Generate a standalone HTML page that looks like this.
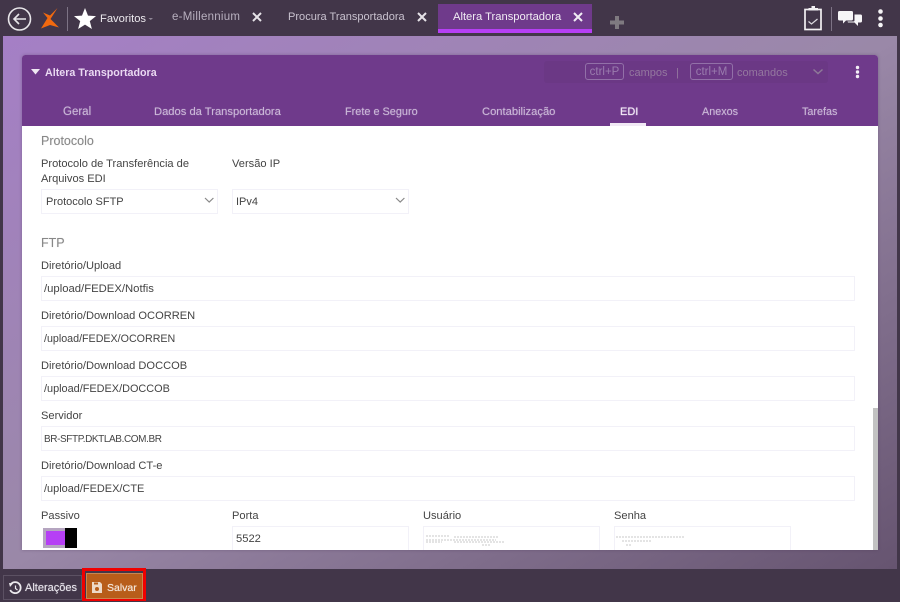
<!DOCTYPE html>
<html><head><meta charset="utf-8"><style>
html,body{margin:0;padding:0}
body{width:900px;height:602px;position:relative;overflow:hidden;background:#423649;font-family:"Liberation Sans",sans-serif;font-size:11.2px;color:#444}
.t{position:absolute;white-space:nowrap;line-height:14px}
.b{position:absolute;box-sizing:border-box;border:1px solid #f2f1f8;background:#fff;height:25px;padding:0 0 0 2px;line-height:25px;color:#444;white-space:nowrap}
.s{padding-left:4px;line-height:25px;font-size:11px}
.h{color:#cbb8d8;text-shadow:0 0 1px rgba(203,184,216,.6)}
.sec{color:#888;font-size:12.500px;text-shadow:0 0 .6px rgba(136,136,136,.5)}
.x{position:absolute}
</style></head><body>
<div class="x" style="left:3px;top:36px;width:894px;height:533px;background:linear-gradient(to bottom right,#a57fc6 0%,#9a88a8 50%,#665470 100%)"></div>

<svg class="x" style="left:0;top:0" width="200" height="36">
<circle cx="19.500" cy="19" r="11" fill="none" stroke="#e8e6ea" stroke-width="1.600"/>
<path d="M26 19H14M19 14l-5 5 5 5" fill="none" stroke="#e8e6ea" stroke-width="1.600"/>
<path d="M57.500 8 50.500 19 59 27.500 50 25 41 28.500 47.500 18 43 12.500 50 15.500z" fill="#f2690f"/>
<rect x="67" y="7" width="1" height="24" fill="#7d7385"/>
<path d="M85 8l3 7.600 8 .5-6.200 5 2.100 7.900L85 24.600l-6.900 4.400 2.100-7.900-6.200-5 8-.5z" fill="#fff"/>
<path d="M148.500 18h4.500l-2.250 2z" fill="#8f8796"/>
</svg>
<div class="t" style="left:100px;top:12px;color:#ece9ee;font-size:11.200px">Favoritos</div>
<div class="t" style="left:172px;top:10px;font-size:11.500px;letter-spacing:.25px;color:#b8b0bf">e-Millennium</div>
<div class="t" style="left:288px;top:10px;font-size:11.050px;color:#c8c1ce">Procura Transportadora</div>
<svg class="x" style="left:251px;top:11px" width="12" height="12"><path d="M2 2l8 8M10 2l-8 8" stroke="#e6e3e8" stroke-width="2"/></svg>
<svg class="x" style="left:416px;top:11px" width="12" height="12"><path d="M2 2l8 8M10 2l-8 8" stroke="#e6e3e8" stroke-width="2"/></svg>
<div class="x" style="left:438px;top:4px;width:154px;height:29px;background:#6f3a8b;border-bottom:4px solid #b63ff5;box-sizing:border-box"></div>
<div class="t" style="left:453px;top:10px;color:#f0ecf3;font-size:11.200px">Altera Transportadora</div>
<svg class="x" style="left:572px;top:11px" width="12" height="12"><path d="M2 2l8 8M10 2l-8 8" stroke="#f0ecf3" stroke-width="2"/></svg>
<svg class="x" style="left:609px;top:15px" width="16" height="16"><path d="M8 1v13M1 7.500h14" stroke="#7f7a80" stroke-width="4"/></svg>

<svg class="x" style="left:800px;top:0" width="100" height="36">
<rect x="5" y="9.500" width="16" height="20" fill="none" stroke="#f2f0f3" stroke-width="1.700"/>
<path d="M8.500 10.500V8h3V6h3.500v2h3v2.500z" fill="#f2f0f3"/>
<path d="M8.500 21.500l3 2.500 6-5" fill="none" stroke="#dcd9df" stroke-width="1.200"/>
<rect x="31" y="7" width="1" height="24" fill="#7d7385"/>
<path d="M39.500 11h12a1.500 1.500 0 0 1 1.500 1.500v6.500a1.500 1.500 0 0 1-1.500 1.500H46l-3 3v-3h-3.500a1.500 1.500 0 0 1-1.500-1.500v-6.500a1.500 1.500 0 0 1 1.500-1.500z" fill="#f6f5f7"/>
<path d="M54.500 14.500h6a1.500 1.500 0 0 1 1.500 1.500v5a1.500 1.500 0 0 1-1.500 1.500H58v3.500l-3.500-3.500H48l-.5-1h6a1 1 0 0 0 1-1z" fill="#f6f5f7"/>
<circle cx="80.500" cy="11.500" r="2.300" fill="#f6f5f7"/><circle cx="80.500" cy="18.500" r="2.300" fill="#f6f5f7"/><circle cx="80.500" cy="25" r="2.300" fill="#f6f5f7"/>
</svg>

<div class="x" style="left:22px;top:55px;width:856px;height:495px;background:#fff;border-radius:3px 3px 0 0;overflow:hidden;box-shadow:0 0 3px rgba(70,50,80,.35)">
<div class="x" style="left:0;top:0;width:856px;height:71px;background:#6f3a8b"></div>
</div>
<svg class="x" style="left:30px;top:68px" width="12" height="8"><path d="M1 1h9L5.500 6.500z" fill="#efe8f3"/></svg>
<div class="t" style="left:45px;top:66px;color:#ead9f2;font-weight:bold;font-size:10.700px">Altera Transportadora</div>

<div class="x" style="left:544px;top:61px;width:284px;height:22px;background:#6b3885;border-radius:3px"></div>
<div class="x" style="left:585px;top:63px;width:39px;height:17px;border:1px solid #9270a8;border-radius:3px;box-sizing:border-box;color:#9a7cae;font-size:11.500px;line-height:17px;text-align:center">ctrl+P</div>
<div class="t" style="left:629px;top:66px;color:#94789f;font-size:11px">campos</div>
<div class="t" style="left:676px;top:66px;color:#94789f;font-size:11px">|</div>
<div class="x" style="left:690px;top:63px;width:43px;height:17px;border:1px solid #9270a8;border-radius:3px;box-sizing:border-box;color:#9a7cae;font-size:11.500px;line-height:17px;text-align:center">ctrl+M</div>
<div class="t" style="left:737px;top:66px;color:#94789f;font-size:11px">comandos</div>
<svg class="x" style="left:812px;top:68px" width="12" height="8"><path d="M1.500 1.500l4.500 4 4.500-4" fill="none" stroke="#8e7a98" stroke-width="1.500"/></svg>
<svg class="x" style="left:854px;top:65px" width="8" height="14"><circle cx="3.500" cy="2.500" r="1.700" fill="#f2edf5"/><circle cx="3.500" cy="7" r="1.700" fill="#f2edf5"/><circle cx="3.500" cy="11.500" r="1.700" fill="#f2edf5"/></svg>

<div class="t h" style="left:63px;top:105px;font-size:11.500px">Geral</div>
<div class="t h" style="left:154px;top:105px;font-size:11.200px">Dados da Transportadora</div>
<div class="t h" style="left:345px;top:105px;font-size:10.900px">Frete e Seguro</div>
<div class="t h" style="left:482px;top:105px;font-size:11.200px">Contabilização</div>
<div class="t" style="left:620px;top:105px;color:#f2e8f7;font-size:11px;text-shadow:0 0 1px #f2e8f7">EDI</div>
<div class="x" style="left:610px;top:123px;width:36px;height:3px;background:#f1e9f5"></div>
<div class="t h" style="left:702px;top:105px;font-size:10.800px">Anexos</div>
<div class="t h" style="left:802px;top:105px;font-size:10.800px">Tarefas</div>

<div class="t sec" style="left:41px;top:134px">Protocolo</div>
<div class="t" style="left:41px;top:157px;font-size:11.100px">Protocolo de Transferência de</div>
<div class="t" style="left:41px;top:172px;font-size:11.100px">Arquivos EDI</div>
<div class="t" style="left:232px;top:157px;font-size:11.100px">Versão IP</div>
<div class="b s" style="left:41px;top:189px;width:177px">Protocolo SFTP</div>
<div class="b s" style="left:232px;top:189px;width:177px;padding-left:3px">IPv4</div>
<svg class="x" style="left:204px;top:197px" width="11" height="7"><path d="M1 1l4.200 4 4.200-4" fill="none" stroke="#888" stroke-width="1.200"/></svg>
<svg class="x" style="left:395px;top:197px" width="11" height="7"><path d="M1 1l4.200 4 4.200-4" fill="none" stroke="#888" stroke-width="1.200"/></svg>

<div class="t sec" style="left:41px;top:236px">FTP</div>
<div class="t" style="left:41px;top:259px;font-size:11.100px">Diretório/Upload</div>
<div class="b" style="left:41px;top:276px;width:814px;font-size:11.300px">/upload/FEDEX/Notfis</div>
<div class="t" style="left:41px;top:309px;font-size:11.100px">Diretório/Download OCORREN</div>
<div class="b" style="left:41px;top:326px;width:814px;font-size:10.700px">/upload/FEDEX/OCORREN</div>
<div class="t" style="left:41px;top:359px;font-size:11.100px">Diretório/Download DOCCOB</div>
<div class="b" style="left:41px;top:376px;width:814px;font-size:10.900px">/upload/FEDEX/DOCCOB</div>
<div class="t" style="left:41px;top:409px;font-size:11.100px">Servidor</div>
<div class="b" style="left:41px;top:426px;width:814px;font-size:10px;letter-spacing:-.4px">BR-SFTP.DKTLAB.COM.BR</div>
<div class="t" style="left:41px;top:459px;font-size:11.100px">Diretório/Download CT-e</div>
<div class="b" style="left:41px;top:476px;width:814px;font-size:10.950px">/upload/FEDEX/CTE</div>
<div class="t" style="left:41px;top:509px;font-size:11.100px">Passivo</div>
<div class="t" style="left:232px;top:509px;font-size:11.100px">Porta</div>
<div class="t" style="left:423px;top:509px;font-size:11.100px">Usuário</div>
<div class="t" style="left:614px;top:509px;font-size:11.100px">Senha</div>

<div class="x" style="left:43px;top:528px;width:34px;height:20px;background:#b5a5c0"></div>
<div class="x" style="left:46px;top:531px;width:20px;height:14px;background:#b63ff5"></div>
<div class="x" style="left:65px;top:528px;width:12px;height:20px;background:#000"></div>
<div class="x" style="left:232px;top:526px;width:177px;height:24px;background:#fff;border:1px solid #f2f1f8;border-bottom:0;box-sizing:border-box;padding-left:3px;line-height:24px;font-size:11.200px">5522</div>
<div class="x" style="left:423px;top:526px;width:177px;height:24px;background:#fff;border:1px solid #f2f1f8;border-bottom:0;box-sizing:border-box"></div>
<div class="x" style="left:614px;top:526px;width:177px;height:24px;background:#fff;border:1px solid #f2f1f8;border-bottom:0;box-sizing:border-box"></div>
<svg class="x" style="left:424px;top:532px" width="380" height="18">
<path d="M2 4h24M2 8h70M2 10h16M30 5h44M30 10h50M58 13h8" stroke="#dcdcdc" stroke-width="1.500" stroke-dasharray="2 1" fill="none"/>
<path d="M192 5h68M198 9h30M202 13h6" stroke="#dcdcdc" stroke-width="1.500" stroke-dasharray="2 1" fill="none"/>
</svg>

<div class="x" style="left:873px;top:408px;width:5px;height:142px;background:#c2c2c2"></div>

<div class="x" style="left:3px;top:575px;width:79px;height:25px;border:1px solid #5c5163;box-sizing:border-box"></div>
<svg class="x" style="left:8px;top:581px" width="14" height="14"><path d="M3 3a5.500 5.500 0 1 1-.8 6" fill="none" stroke="#ece9ee" stroke-width="1.800"/><path d="M1 2l4 .5L2 6z" fill="#ece9ee"/><path d="M7.500 4.500v3l2 1.500" fill="none" stroke="#ece9ee" stroke-width="1.200"/></svg>
<div class="t" style="left:25px;top:581px;color:#e4e0e8;font-size:11px;text-shadow:0 0 .6px #e4e0e8">Alterações</div>
<div class="x" style="left:82px;top:568px;width:64px;height:33px;border:3px solid #f00000;box-sizing:border-box;background:#423649"></div>
<div class="x" style="left:86px;top:573px;width:57px;height:26px;background:#b85d1a;border:1px solid #c98550;box-sizing:border-box"></div>
<svg class="x" style="left:91px;top:581px" width="12" height="13"><path d="M1 1h8l2 2v9H1z" fill="#edd9c8"/><path d="M3 1.500h4v2H3z" fill="#b85d1a"/><circle cx="6" cy="8" r="2" fill="#b85d1a"/></svg>
<div class="t" style="left:107px;top:581px;color:#f4e6da;font-size:10.500px;text-shadow:0 0 .6px #f4e6da">Salvar</div>
</body></html>
